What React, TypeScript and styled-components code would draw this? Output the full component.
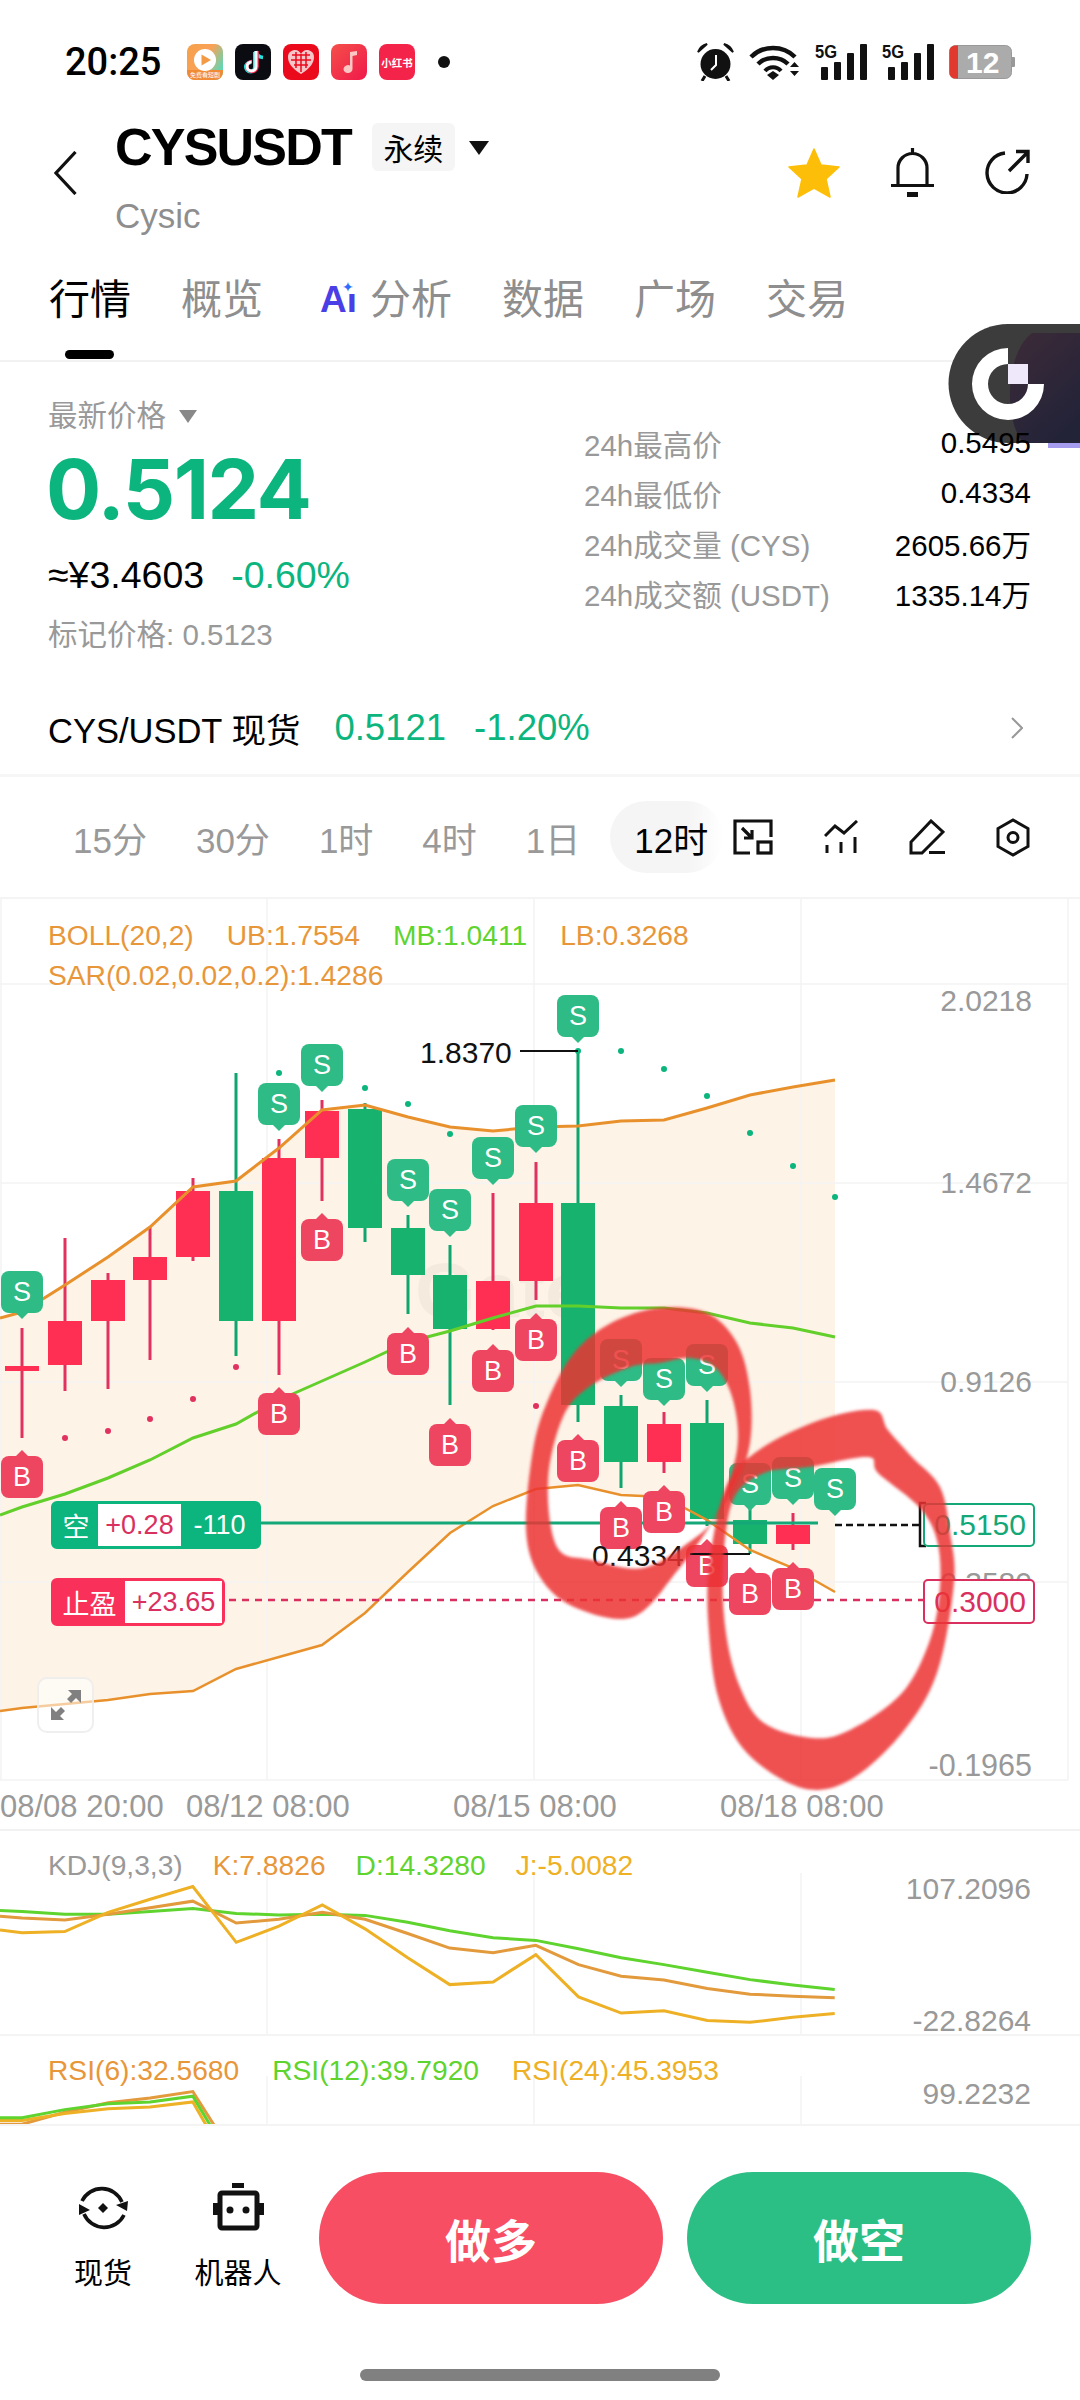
import React from 'react'
import styled, {createGlobalStyle} from 'styled-components'

const SANS = `"Liberation Sans", "Noto Sans CJK SC", sans-serif`
const GREY = '#999999'
const GREEN = '#0bb57d'
const PINK = '#d9305f'
const ORANGE = '#e8963a'
const LIME = '#5fd32e'
const YELLOW = '#eeb024'

const GlobalStyle = createGlobalStyle`
  html, body {
    margin: 0;
    padding: 0;
    background: #fff;
  }
`

const Page = styled.div`
  position: relative;
  width: 1080px;
  height: 2400px;
  overflow: hidden;
  background: #fff;
  font-family: ${SANS};
  color: #000;
  display: flex;
  flex-direction: column;
`

/* status bar */
const StatusBar = styled.div`
  height: 100px;
  box-sizing: border-box;
  padding: 24px 65px 0 65px;
  display: flex;
  align-items: center;
`
const Clock = styled.div`
  font-family: Roboto, sans-serif;
  font-weight: 500;
  font-size: 38px;
  width: 122px;
`
const AppIcons = styled.div`
  display: flex;
  align-items: center;
  gap: 12px;
`
const NoticeDot = styled.div`
  width: 12px;
  height: 12px;
  border-radius: 50%;
  background: #111;
  margin-left: 23px;
`
const StatusRight = styled.div`
  margin-left: auto;
  display: flex;
  align-items: center;
  gap: 15px;
`

const TinyText = styled.text`
  font-family: ${SANS};
  fill: #fff;
  text-anchor: middle;
`

const VideoApp = () => (
  <svg width="36" height="36" viewBox="0 0 36 36">
    <defs>
      <linearGradient id="vid" x1="0" y1="0" x2="1" y2="0.6">
        <stop offset="0" stopColor="#f6a04a" />
        <stop offset="0.55" stopColor="#f9a258" />
        <stop offset="1" stopColor="#63d6b4" />
      </linearGradient>
    </defs>
    <rect width="36" height="36" rx="8" fill="url(#vid)" />
    <path d="M0 26h36v2a8 8 0 0 1-8 8H8a8 8 0 0 1-8-8z" fill="#f08a35" />
    <circle cx="18" cy="16" r="11" fill="#fff" />
    <path d="M14.500 10.500 L24 16 L14.500 21.500 Z" fill="#f49a45" />
    <TinyText x="18" y="33" fontSize="6">免费看短剧</TinyText>
  </svg>
)
const TiktokApp = () => (
  <svg width="36" height="36" viewBox="0 0 36 36">
    <rect width="36" height="36" rx="8" fill="#0b0b12" />
    <path d="M20 8v15a4.500 4.500 0 1 1-4.500-4.500" fill="none" stroke="#25e4e0" strokeWidth="4" />
    <path d="M21 7c.5 3.500 3 6 7 6.500" fill="none" stroke="#25e4e0" strokeWidth="3.500" />
    <path d="M22 7v15.500a5 5 0 1 1-5-5" fill="none" stroke="#fe2c55" strokeWidth="3.500" />
    <path d="M21 7v15.500a4.500 4.500 0 1 1-4.500-4.500" fill="none" stroke="#fff" strokeWidth="3" />
  </svg>
)
const HeartApp = () => (
  <svg width="36" height="36" viewBox="0 0 36 36">
    <rect width="36" height="36" rx="8" fill="#ea0a1c" />
    <path d="M18 30 C8 24 5 18 5 13 C5 8 9 6 12 6 C15 6 17 8 18 10 C19 8 21 6 24 6 C27 6 31 8 31 13 C31 18 28 24 18 30 Z" fill="#f6c5c8" />
    <path d="M9 11h18M8 16h20M11 21h14M13 8v16M18 10v18M23 8v16" stroke="#ea0a1c" strokeWidth="1.500" />
  </svg>
)
const MusicApp = () => (
  <svg width="36" height="36" viewBox="0 0 36 36">
    <defs>
      <linearGradient id="mus" x1="0" y1="0" x2="1" y2="1">
        <stop offset="0" stopColor="#f4504a" />
        <stop offset="1" stopColor="#f0184a" />
      </linearGradient>
    </defs>
    <rect width="36" height="36" rx="8" fill="url(#mus)" />
    <path d="M19 8 L26 7 V11 L21.500 12 V25 A4.500 4 0 1 1 19 21.500 Z" fill="#fbc7c4" />
  </svg>
)
const BookApp = () => (
  <svg width="36" height="36" viewBox="0 0 36 36">
    <rect width="36" height="36" rx="8" fill="#f4234a" />
    <TinyText x="18" y="23" fontSize="10.500" fontWeight="700">小红书</TinyText>
  </svg>
)

const AlarmIcon = () => (
  <svg width="37" height="38" viewBox="0 0 37 38">
    <circle cx="18.500" cy="21" r="15" fill="#111" />
    <path d="M1 9 C3 4 6 2 10 1 Z M36 9 C34 4 31 2 27 1 Z" fill="#111" stroke="#111" strokeWidth="2" />
    <path d="M8 33 L5 38 M29 33 L32 38" stroke="#111" strokeWidth="3" />
    <path d="M19 12 V22 L14 27" fill="none" stroke="#fff" strokeWidth="2" />
  </svg>
)
const WifiIcon = () => (
  <svg width="51" height="36" viewBox="0 0 51 36">
    <path d="M2 13 C14 1 34 1 46 13" fill="none" stroke="#111" strokeWidth="4.500" />
    <path d="M9 20 C17 12 31 12 39 20" fill="none" stroke="#111" strokeWidth="4.500" />
    <path d="M16 27 C20 22 28 22 32 27" fill="none" stroke="#111" strokeWidth="4" />
    <path d="M18 31 L24 27 L30 31 L24 36 Z" fill="#111" />
    <path d="M41 23 L45.500 18 L50 23 Z M41 27 H50 L45.500 32 Z" fill="#111" />
  </svg>
)
const SignalLabel = styled.text`
  font-family: "Liberation Sans Narrow", "Liberation Sans", sans-serif;
  font-weight: 700;
  font-size: 18px;
  fill: #111;
`
const SignalIcon = () => (
  <svg width="52" height="38" viewBox="0 0 52 38">
    <SignalLabel x="0" y="15" textLength="22" lengthAdjust="spacingAndGlyphs">5G</SignalLabel>
    <rect x="6" y="24" width="7" height="13" rx="1" fill="#111" />
    <rect x="19" y="19" width="7" height="18" rx="1" fill="#111" />
    <rect x="32" y="10" width="7" height="27" rx="1" fill="#111" />
    <rect x="45" y="1" width="7" height="36" rx="1" fill="#111" />
  </svg>
)
const BatteryText = styled.text`
  font-family: ${SANS};
  font-weight: 700;
  font-size: 30px;
  fill: #fff;
`
const BatteryIcon = () => (
  <svg width="66" height="34" viewBox="0 0 66 34">
    <rect x="0.500" y="0.500" width="62" height="33" rx="6" fill="#ababab" stroke="#999" />
    <path d="M6 .5 H9 V33.500 H6 A5.500 5.500 0 0 1 .5 28 V6 A5.500 5.500 0 0 1 6 .5 Z" fill="#e2392e" />
    <path d="M63 12 h2 a1 1 0 0 1 1 1 v8 a1 1 0 0 1 -1 1 h-2 z" fill="#999" />
    <BatteryText x="17" y="28">12</BatteryText>
  </svg>
)

/* header */
const Header = styled.div`
  height: 150px;
  box-sizing: border-box;
  padding: 22px 50px 0 54px;
  display: flex;
  align-items: flex-start;
`
const BackIcon = styled.svg`
  margin-top: 29px;
  margin-right: 38px;
`
const TitleBlock = styled.div`
  display: flex;
  flex-direction: column;
`
const TitleRow = styled.div`
  display: flex;
  align-items: center;
  height: 50px;
`
const Symbol = styled.div`
  font-size: 52px;
  font-weight: 700;
  letter-spacing: -1.800px;
  line-height: 50px;
`
const PerpTag = styled.div`
  margin-left: 21px;
  width: 83px;
  height: 48px;
  background: #f5f5f5;
  border-radius: 6px;
  font-size: 30px;
  display: flex;
  align-items: center;
  justify-content: center;
`
const Caret = styled.div<{$w: number; $h: number; $c: string}>`
  width: 0;
  height: 0;
  border-left: ${(p) => p.$w / 2}px solid transparent;
  border-right: ${(p) => p.$w / 2}px solid transparent;
  border-top: ${(p) => p.$h}px solid ${(p) => p.$c};
`
const TitleCaret = styled(Caret)`
  margin-left: 14px;
  margin-top: 2px;
`
const BaseName = styled.div`
  margin-top: 26px;
  font-size: 35px;
  line-height: 36px;
  color: #8e8e8e;
`
const HeaderActions = styled.div`
  margin-left: auto;
  margin-top: 26px;
  display: flex;
  align-items: flex-start;
  gap: 50px;
`

/* tabs */
const TabRow = styled.div`
  height: 112px;
  box-sizing: border-box;
  padding: 28px 0 0 49px;
  display: flex;
  align-items: flex-start;
  gap: 50px;
  border-bottom: 2px solid #f2f2f2;
`
const Tab = styled.div<{$active?: boolean}>`
  position: relative;
  font-size: 41px;
  line-height: 44px;
  color: ${(p) => (p.$active ? '#000' : '#8e8e8e')};
  display: flex;
  align-items: center;
  &::after {
    content: ${(p) => (p.$active ? '""' : 'none')};
    position: absolute;
    left: 16px;
    top: 72px;
    width: 49px;
    height: 9px;
    border-radius: 5px;
    background: #000;
  }
`
const AiMark = styled.span`
  position: relative;
  width: 50px;
  margin-left: 7px;
  font-size: 37px;
  font-weight: 700;
  font-family: "Liberation Sans", sans-serif;
  color: #4a3fe6;
`
const AiSpark = styled.span`
  position: absolute;
  left: 22px;
  top: 2px;
  width: 14px;
  height: 14px;
  font-size: 14px;
  line-height: 14px;
  color: #2f6bff;
  background: #fff;
  font-family: "DejaVu Sans", sans-serif;
`

/* price */
const PriceSection = styled.div`
  position: relative;
  z-index: 1;
  height: 325px;
  box-sizing: border-box;
  padding: 0 49px 0 48px;
  display: flex;
`
const PriceLeft = styled.div`
  width: 536px;
  padding-top: 34px;
  display: flex;
  flex-direction: column;
`
const LatestLabel = styled.div`
  display: flex;
  align-items: center;
  gap: 13px;
  font-size: 29.500px;
  line-height: 40px;
  color: ${GREY};
`
const LastPrice = styled.div`
  margin: 4px 0 0 -2px;
  font-family: Inter, sans-serif;
  font-weight: 700;
  font-size: 82px;
  line-height: 100px;
  letter-spacing: -1.500px;
  color: ${GREEN};
`
const FiatRow = styled.div`
  margin-top: 15px;
  display: flex;
  gap: 27px;
  font-size: 37.500px;
  line-height: 40px;
`
const Change = styled.span`
  color: ${GREEN};
`
const MarkPrice = styled.div`
  margin-top: 20px;
  font-size: 29.500px;
  line-height: 40px;
  color: ${GREY};
`
const Stats = styled.div`
  flex: 1;
  padding-top: 56px;
  display: flex;
  flex-direction: column;
`
const StatRow = styled.div`
  height: 50px;
  display: flex;
  align-items: center;
  justify-content: space-between;
  font-size: 29.500px;
`
const StatLabel = styled.span`
  color: ${GREY};
`

const SpotRow = styled.div`
  height: 90px;
  box-sizing: border-box;
  padding: 0 57px 5px 48px;
  display: flex;
  align-items: center;
  border-bottom: 3px solid #f6f6f6;
  font-size: 34.500px;
`
const SpotPrice = styled.span<{$gap: number}>`
  margin-left: ${(p) => p.$gap}px;
  font-size: 36.500px;
  color: ${GREEN};
`
const SpotArrow = styled.svg`
  margin-left: auto;
`

/* timeframes */
const FrameRow = styled.div`
  height: 122px;
  box-sizing: border-box;
  padding-left: 73px;
  display: flex;
  align-items: center;
  border-bottom: 2px solid #f4f4f4;
`
const Frames = styled.div`
  display: flex;
  align-items: center;
  gap: 49px;
  font-size: 35px;
  color: ${GREY};
`
const FrameActive = styled.div`
  margin-left: -19px;
  padding: 0 15px 0 24px;
  height: 72px;
  display: flex;
  align-items: center;
  border-radius: 36px;
  color: #000;
  background: linear-gradient(90deg, #f5f5f5 70%, #fff 100%);
`
const FrameTools = styled.div`
  margin-left: 10px;
  display: flex;
  align-items: center;
  gap: 51px;
`

/* chart panels */
const MainPanel = styled.div`
  position: relative;
  height: 932px;
  box-sizing: border-box;
  border-bottom: 2px solid #f2f2f2;
  padding: 16px 0 0 48px;
`
const SubPanel = styled.div<{$h: number}>`
  position: relative;
  height: ${(p) => p.$h}px;
  box-sizing: border-box;
  padding: 14px 0 0 48px;
  overflow: hidden;
  border-bottom: 2px solid #f4f4f4;
`
const Canvas = styled.svg`
  position: absolute;
  left: 0;
  top: 0;
`
const InkLayer = styled(Canvas)`
  z-index: 3;
  pointer-events: none;
`
const LegendRow = styled.div<{$gap: number}>`
  position: relative;
  z-index: 1;
  display: flex;
  gap: ${(p) => p.$gap}px;
  font-size: 28.200px;
  line-height: 40px;
`
const LegendItem = styled.span<{$c: string}>`
  color: ${(p) => p.$c};
`
const AxisText = styled.text<{$c?: string; $size?: number; $anchor?: string}>`
  font-family: ${SANS};
  font-size: ${(p) => p.$size ?? 30}px;
  fill: ${(p) => p.$c ?? GREY};
  text-anchor: ${(p) => p.$anchor ?? 'end'};
  dominant-baseline: central;
`
const MarkerLetter = styled.text`
  font-family: ${SANS};
  font-size: 27px;
  fill: #fff;
  text-anchor: middle;
  dominant-baseline: central;
`

const PositionTag = styled.div<{$top: number; $w: number; $c: string}>`
  position: absolute;
  z-index: 2;
  left: 51px;
  top: ${(p) => p.$top}px;
  width: ${(p) => p.$w}px;
  height: 48px;
  box-sizing: border-box;
  border: 3px solid ${(p) => p.$c};
  border-radius: 6px;
  background: ${(p) => p.$c};
  display: flex;
  align-items: stretch;
  font-size: 27px;
  color: #fff;
`
const TagCell = styled.div<{$w: number}>`
  width: ${(p) => p.$w}px;
  display: flex;
  align-items: center;
  justify-content: center;
`
const TagValue = styled(TagCell)<{$c: string}>`
  background: #fff;
  color: ${(p) => p.$c};
`
const PriceBox = styled.div<{$top: number; $h: number; $c: string}>`
  position: absolute;
  z-index: 2;
  left: 923px;
  top: ${(p) => p.$top}px;
  width: 112px;
  height: ${(p) => p.$h}px;
  box-sizing: border-box;
  border: 2.500px solid ${(p) => p.$c};
  border-radius: 5px;
  background: #fff;
  color: ${(p) => p.$c};
  font-size: 30px;
  display: flex;
  align-items: center;
  justify-content: flex-end;
  padding-right: 7px;
`
const ExpandButton = styled.div`
  position: absolute;
  z-index: 2;
  left: 37px;
  top: 778px;
  width: 57px;
  height: 56px;
  box-sizing: border-box;
  border: 2px solid rgba(235, 235, 235, 0.8);
  border-radius: 10px;
  background: rgba(255, 255, 255, 0.55);
  display: flex;
  align-items: center;
  justify-content: center;
`

/* bottom bar */
const BottomBar = styled.div`
  flex: 1;
  box-sizing: border-box;
  padding-top: 46px;
  display: flex;
  flex-direction: column;
`
const BottomRow = styled.div`
  display: flex;
  align-items: flex-start;
  padding: 0 49px 0 43px;
`
const Action = styled.div`
  width: 120px;
  margin-top: 11px;
  margin-right: 15px;
  display: flex;
  flex-direction: column;
  align-items: center;
  gap: 21px;
  font-size: 29px;
  line-height: 40px;
`
const ActionIcon = styled.div`
  height: 50px;
`
const TradeButton = styled.div<{$c: string}>`
  width: 344px;
  height: 132px;
  border-radius: 66px;
  background: ${(p) => p.$c};
  color: #fff;
  font-size: 46px;
  font-weight: 700;
  display: flex;
  align-items: center;
  justify-content: center;
  margin-left: ${(p) => (p.$c === '#f84e63' ? '6px' : '24px')};
`
const HomeBar = styled.div`
  align-self: center;
  margin-top: 65px;
  width: 360px;
  height: 12px;
  border-radius: 6px;
  background: #808080;
`

/* floating widget */
const FloatWidget = styled.svg`
  position: absolute;
  z-index: 0;
  left: 948px;
  top: 324px;
`

type P = [number, number]
const poly = (pts: P[]) => pts.map((p, i) => `${i ? 'L' : 'M'}${p[0]} ${p[1]}`).join(' ')
const smooth = (pts: P[]) => {
  const n = pts.length
  let d = `M${pts[0][0]} ${pts[0][1]}`
  for (let i = 0; i < n; i++) {
    const a = pts[(i - 1 + n) % n]
    const b = pts[i]
    const c = pts[(i + 1) % n]
    const e = pts[(i + 2) % n]
    d += ` C${b[0] + (c[0] - a[0]) / 6} ${b[1] + (c[1] - a[1]) / 6} ${c[0] - (e[0] - b[0]) / 6} ${c[1] - (e[1] - b[1]) / 6} ${c[0]} ${c[1]}`
  }
  return d + ' Z'
}

const upper: P[] = [[0, 1318], [22, 1312], [65, 1285], [108, 1257], [150, 1227], [193, 1187], [236, 1181], [279, 1148], [322, 1110], [365, 1105], [408, 1117], [450, 1127], [493, 1131], [536, 1127], [578, 1126], [621, 1121], [664, 1120], [707, 1108], [750, 1095], [793, 1087], [835, 1080]]
const middle: P[] = [[0, 1515], [22, 1507], [65, 1494], [108, 1478], [150, 1460], [193, 1438], [236, 1424], [279, 1400], [322, 1381], [365, 1362], [408, 1342], [450, 1331], [493, 1318], [536, 1306], [578, 1306], [621, 1308], [664, 1308], [707, 1313], [750, 1323], [793, 1328], [835, 1337]]
const lower: P[] = [[0, 1711], [22, 1708], [65, 1704], [108, 1700], [150, 1694], [193, 1691], [236, 1669], [279, 1657], [322, 1645], [365, 1613], [408, 1572], [450, 1533], [493, 1506], [536, 1489], [578, 1485], [621, 1495], [664, 1497], [707, 1520], [750, 1550], [793, 1568], [835, 1592]]

// x, wick top, wick bottom, body top, body bottom, up
const candles: [number, number, number, number, number, boolean][] = [
  [22, 1328, 1438, 1366, 1371, true],
  [65, 1238, 1391, 1321, 1365, true],
  [108, 1273, 1389, 1280, 1321, true],
  [150, 1227, 1360, 1257, 1280, true],
  [193, 1178, 1261, 1191, 1257, true],
  [236, 1073, 1356, 1191, 1321, false],
  [279, 1139, 1375, 1158, 1321, true],
  [322, 1100, 1201, 1111, 1158, true],
  [365, 1103, 1242, 1109, 1228, false],
  [408, 1215, 1314, 1228, 1275, false],
  [450, 1245, 1405, 1275, 1329, false],
  [493, 1193, 1330, 1281, 1329, true],
  [536, 1162, 1300, 1203, 1281, true],
  [578, 1050, 1422, 1203, 1405, false],
  [621, 1395, 1488, 1406, 1462, false],
  [664, 1412, 1473, 1424, 1462, true],
  [707, 1400, 1526, 1423, 1519, false],
  [750, 1500, 1554, 1520, 1544, false],
  [793, 1513, 1550, 1525, 1544, true]
]

const sarUp: P[] = [[279, 1073], [365, 1088], [408, 1104], [450, 1134], [578, 1051], [621, 1051], [664, 1069], [707, 1096], [750, 1133], [793, 1166], [835, 1197]]
const sarDown: P[] = [[65, 1438], [108, 1431], [150, 1419], [193, 1399], [236, 1367], [536, 1406]]

const sells: P[] = [[22, 1271], [279, 1083], [322, 1044], [408, 1159], [450, 1189], [493, 1137], [536, 1105], [578, 995], [621, 1339], [664, 1358], [707, 1344], [750, 1463], [793, 1457], [835, 1468]]
const buys: P[] = [[22, 1456], [279, 1393], [322, 1219], [408, 1333], [450, 1424], [493, 1350], [536, 1319], [578, 1440], [621, 1507], [664, 1491], [707, 1545], [750, 1573], [793, 1568]]

const inkLeftOuter: P[] = [[659, 1308], [707, 1313], [737, 1343], [750, 1390], [750, 1443], [736, 1483], [712, 1523], [678, 1570], [633, 1617], [574, 1607], [540, 1577], [526, 1530], [533, 1450], [548, 1400], [574, 1353], [611, 1323]]
const inkLeftInner: P[] = [[659, 1363], [630, 1367], [589, 1387], [563, 1417], [548, 1480], [557, 1547], [592, 1560], [643, 1568], [688, 1543], [716, 1515], [737, 1450], [733, 1400], [716, 1368], [690, 1358]]
const inkRightOuter: P[] = [[874, 1410], [820, 1420], [759, 1450], [726, 1487], [709, 1567], [709, 1633], [719, 1700], [747, 1753], [802, 1788], [850, 1780], [902, 1733], [937, 1673], [954, 1583], [950, 1533], [940, 1487], [912, 1457], [888, 1430]]
const inkRightInner: P[] = [[809, 1467], [868, 1457], [878, 1473], [919, 1507], [937, 1540], [940, 1587], [930, 1640], [902, 1693], [850, 1730], [812, 1738], [764, 1723], [740, 1687], [726, 1633], [723, 1567], [733, 1500], [764, 1473]]

const kx = [0, 32, 94, 157, 218, 280, 343, 405, 468, 530, 592, 653, 716, 778, 840, 902, 964, 1027, 1089, 1151, 1212]
const kdj = (ys: number[]): P[] => ys.map((v, i) => [kx[i] / 1.452, 1800 + v / 2.6])
const kdjD = kdj([287, 290, 297, 297, 290, 282, 295, 299, 297, 300, 318, 340, 358, 365, 387, 410, 428, 448, 467, 481, 493])
const kdjK = kdj([302, 307, 312, 297, 280, 263, 320, 310, 292, 310, 347, 385, 397, 378, 428, 458, 468, 490, 505, 510, 514])
const kdjJ = kdj([338, 345, 342, 292, 258, 225, 370, 328, 273, 335, 410, 480, 473, 402, 512, 554, 548, 573, 578, 565, 555])

const rsiOf = (ys: number[], end: number): P[] => [
  ...[0, 32, 94, 157, 218, 280].map((x, i): P => [x / 1.452, 1800 + ys[i] / 2.6]),
  [end / 1.452, 1800 + 860 / 2.6]
]
const rsi6 = rsiOf([843, 843, 812, 787, 775, 758], 316)
const rsi12 = rsiOf([826, 826, 805, 790, 785, 770], 310)
const rsi24 = rsiOf([833, 833, 815, 803, 798, 785], 304)

const GRID = '#f3f3f3'

const Marker = ({x, y, kind}: {x: number; y: number; kind: 'S' | 'B'}) => {
  const isSell = kind === 'S'
  const fill = isSell ? '#2ebb85' : '#ee4560'
  const tip = isSell
    ? `${x - 7},${y + 41} ${x},${y + 48} ${x + 7},${y + 41}`
    : `${x - 7},${y + 1} ${x},${y - 6} ${x + 7},${y + 1}`
  return (
    <g>
      <polygon points={tip} fill={fill} />
      <rect x={x - 21} y={y} width={42} height={42} rx={8} fill={fill} />
      <MarkerLetter x={x} y={y + 21}>{kind}</MarkerLetter>
    </g>
  )
}

const MainChart = () => (
  <Canvas width="1080" height="932" viewBox="0 899 1080 932">
    <path d={`${poly(upper)} ${poly([...lower].reverse()).replace('M', 'L')} Z`} fill="#fdf3e7" />
    {[984, 1183, 1382, 1582, 1780].map((y) => (
      <line key={y} x1="0" x2="1068" y1={y} y2={y} stroke={GRID} strokeWidth="1.500" />
    ))}
    {[1, 267, 534, 801, 1068].map((x) => (
      <line key={x} x1={x} x2={x} y1="899" y2="1780" stroke={GRID} strokeWidth="1.500" />
    ))}
    <AxisText x="415" y="1290" $c="rgba(0,0,0,0.035)" $size={78} $anchor="start" fontWeight="700">Gate</AxisText>
    {candles.map(([x, wt, wb, bt, bb, up]) => (
      <g key={x}>
        <line x1={x} x2={x} y1={wt} y2={wb} stroke={up ? '#e0315f' : '#0ea56f'} strokeWidth="3" />
        <rect x={x - 17} y={bt} width="34" height={bb - bt} fill={up ? '#fe2f53' : '#17b26e'} />
      </g>
    ))}
    {sarUp.map(([x, y]) => <circle key={`${x}${y}`} cx={x} cy={y} r="3" fill={GREEN} />)}
    {sarDown.map(([x, y]) => <circle key={`${x}${y}`} cx={x} cy={y} r="3" fill="#e0315f" />)}
    <path d={poly(upper)} fill="none" stroke="#e8912c" strokeWidth="3" />
    <path d={poly(lower)} fill="none" stroke="#e8912c" strokeWidth="2.500" />
    <path d={poly(middle)} fill="none" stroke="#62cf2b" strokeWidth="3" />
    <line x1="261" x2="818" y1="1523" y2="1523" stroke="#14a878" strokeWidth="3" />
    <line x1="835" x2="919" y1="1525" y2="1525" stroke="#111" strokeWidth="2.500" strokeDasharray="7 4" />
    <path d="M926 1503 H920 V1546 H926" fill="none" stroke="#111" strokeWidth="2.500" />
    <line x1="229" x2="923" y1="1600" y2="1600" stroke={PINK} strokeWidth="2.500" strokeDasharray="7 6" />
    {sells.map(([x, y]) => <Marker key={`s${x}`} x={x} y={y} kind="S" />)}
    {buys.map(([x, y]) => <Marker key={`b${x}`} x={x} y={y} kind="B" />)}
    <AxisText x="420" y="1052" $c="#111" $anchor="start">1.8370</AxisText>
    <line x1="520" x2="578" y1="1051" y2="1051" stroke="#111" strokeWidth="2" />
    <AxisText x="592" y="1555" $c="#111" $anchor="start">0.4334</AxisText>
    <line x1="690" x2="750" y1="1554" y2="1554" stroke="#111" strokeWidth="2" />
    <AxisText x="1032" y="1000">2.0218</AxisText>
    <AxisText x="1032" y="1182">1.4672</AxisText>
    <AxisText x="1032" y="1381">0.9126</AxisText>
    <AxisText x="1032" y="1582">0.3580</AxisText>
    <AxisText x="1032" y="1765" $size={30.5}>-0.1965</AxisText>
    <AxisText x="0" y="1806" $size={31} $anchor="start">08/08 20:00</AxisText>
    <AxisText x="186" y="1806" $size={31} $anchor="start">08/12 08:00</AxisText>
    <AxisText x="453" y="1806" $size={31} $anchor="start">08/15 08:00</AxisText>
    <AxisText x="720" y="1806" $size={31} $anchor="start">08/18 08:00</AxisText>
  </Canvas>
)

const HandInk = () => (
  <InkLayer width="1080" height="932" viewBox="0 899 1080 932">
    <defs>
      <filter id="brush" x="-5%" y="-5%" width="110%" height="110%">
        <feGaussianBlur stdDeviation="1.600" />
      </filter>
    </defs>
    <g filter="url(#brush)" fill="#ec3232" fillOpacity="0.85" fillRule="evenodd">
      <path d={`${smooth(inkLeftOuter)} ${smooth(inkLeftInner)}`} />
      <path d={`${smooth(inkRightOuter)} ${smooth(inkRightInner)}`} />
    </g>
  </InkLayer>
)

const KdjChart = () => (
  <Canvas width="1080" height="205" viewBox="0 1831 1080 205">
    {[267, 534, 801].map((x) => (
      <line key={x} x1={x} x2={x} y1="1873" y2="2034" stroke={GRID} strokeWidth="1.500" />
    ))}
    <path d={poly(kdjD)} fill="none" stroke="#5fd32e" strokeWidth="3" />
    <path d={poly(kdjK)} fill="none" stroke="#e29a3c" strokeWidth="3" />
    <path d={poly(kdjJ)} fill="none" stroke={YELLOW} strokeWidth="3" />
    <AxisText x="1031" y="1888">107.2096</AxisText>
    <AxisText x="1031" y="2020">-22.8264</AxisText>
  </Canvas>
)

const RsiChart = () => (
  <Canvas width="1080" height="90" viewBox="0 2036 1080 90">
    {[267, 534, 801].map((x) => (
      <line key={x} x1={x} x2={x} y1="2076" y2="2126" stroke={GRID} strokeWidth="1.500" />
    ))}
    <path d={poly(rsi6)} fill="none" stroke="#e29a3c" strokeWidth="3" />
    <path d={poly(rsi24)} fill="none" stroke={YELLOW} strokeWidth="3" />
    <path d={poly(rsi12)} fill="none" stroke="#5fd32e" strokeWidth="3" />
    <AxisText x="1031" y="2093">99.2232</AxisText>
  </Canvas>
)

const App = () => {
  return (
    <Page>
      <GlobalStyle />
      <FloatWidget width="132" height="124" viewBox="0 0 132 124">
        <defs>
          <linearGradient id="wid" x1="0" y1="0" x2="0.6" y2="1">
            <stop offset="0" stopColor="#3d2b38" />
            <stop offset="1" stopColor="#232338" />
          </linearGradient>
        </defs>
        <rect x="100" y="115" width="32" height="9" fill="#a79df0" />
        <path d="M60 0 H132 V119 H60 A59.500 59.500 0 0 1 60 0 Z" fill="#3c3c3c" />
        <path d="M84 9 H132 V119 H76 C56 100 56 30 84 9 Z" fill="url(#wid)" />
        <path d="M60 24 A36 36 0 1 0 96 60 H80 A20 20 0 1 1 60 40 Z" fill="#fff" />
        <rect x="60" y="40" width="20" height="20" fill="#efe8fb" />
      </FloatWidget>

      <StatusBar>
        <Clock>20:25</Clock>
        <AppIcons>
          <VideoApp />
          <TiktokApp />
          <HeartApp />
          <MusicApp />
          <BookApp />
        </AppIcons>
        <NoticeDot />
        <StatusRight>
          <AlarmIcon />
          <WifiIcon />
          <SignalIcon />
          <SignalIcon />
          <BatteryIcon />
        </StatusRight>
      </StatusBar>

      <Header>
        <BackIcon width="23" height="44" viewBox="0 0 23 44">
          <path d="M21.500 1 L2 22 L21.500 43" fill="none" stroke="#111" strokeWidth="3.200" />
        </BackIcon>
        <TitleBlock>
          <TitleRow>
            <Symbol>CYSUSDT</Symbol>
            <PerpTag>永续</PerpTag>
            <TitleCaret $w={20} $h={14} $c="#111" />
          </TitleRow>
          <BaseName>Cysic</BaseName>
        </TitleBlock>
        <HeaderActions>
          <svg width="52" height="50" viewBox="0 0 52 50">
            <path d="M26 1 L33 17 L51 19 L38 31 L42 49 L26 40 L10 49 L14 31 L1 19 L19 17 Z" fill="#fdbe09" stroke="#fdbe09" strokeWidth="1.500" strokeLinejoin="round" />
          </svg>
          <svg width="45" height="49" viewBox="0 0 45 49">
            <path d="M22.500 0 V6 M8 37 V20 a14.500 14.500 0 0 1 29 0 V37 M1 37.500 H44" fill="none" stroke="#111" strokeWidth="3.200" />
            <rect x="17" y="44" width="11" height="5" fill="#111" />
          </svg>
          <svg width="45" height="46" viewBox="0 0 45 46">
            <path d="M20 5 A20 20 0 1 0 42 26 M24 23 L42 5 M31 3.500 H43 V15" fill="none" stroke="#111" strokeWidth="3.400" />
          </svg>
        </HeaderActions>
      </Header>

      <TabRow>
        <Tab $active>行情</Tab>
        <Tab>概览</Tab>
        <Tab>
          <AiMark>
            Ai
            <AiSpark>✦</AiSpark>
          </AiMark>
          分析
        </Tab>
        <Tab>数据</Tab>
        <Tab>广场</Tab>
        <Tab>交易</Tab>
      </TabRow>

      <PriceSection>
        <PriceLeft>
          <LatestLabel>
            最新价格
            <Caret $w={18} $h={13} $c="#888" />
          </LatestLabel>
          <LastPrice>0.5124</LastPrice>
          <FiatRow>
            <span>≈¥3.4603</span>
            <Change>-0.60%</Change>
          </FiatRow>
          <MarkPrice>标记价格: 0.5123</MarkPrice>
        </PriceLeft>
        <Stats>
          <StatRow>
            <StatLabel>24h最高价</StatLabel>
            <span>0.5495</span>
          </StatRow>
          <StatRow>
            <StatLabel>24h最低价</StatLabel>
            <span>0.4334</span>
          </StatRow>
          <StatRow>
            <StatLabel>24h成交量 (CYS)</StatLabel>
            <span>2605.66万</span>
          </StatRow>
          <StatRow>
            <StatLabel>24h成交额 (USDT)</StatLabel>
            <span>1335.14万</span>
          </StatRow>
        </Stats>
      </PriceSection>

      <SpotRow>
        CYS/USDT 现货
        <SpotPrice $gap={34}>0.5121</SpotPrice>
        <SpotPrice $gap={28}>-1.20%</SpotPrice>
        <SpotArrow width="12" height="22" viewBox="0 0 12 22">
          <path d="M1 1 L11 11 L1 21" fill="none" stroke="#999" strokeWidth="2" />
        </SpotArrow>
      </SpotRow>

      <FrameRow>
        <Frames>
          <span>15分</span>
          <span>30分</span>
          <span>1时</span>
          <span>4时</span>
          <span>1日</span>
          <FrameActive>12时</FrameActive>
        </Frames>
        <FrameTools>
          <svg width="40" height="36" viewBox="0 0 40 36">
            <path d="M17 34 H2 V2 H38 V18 M9 9 L19 19 M19 11 V19 H11" fill="none" stroke="#111" strokeWidth="3.200" />
            <rect x="25" y="23" width="13" height="11" fill="none" stroke="#111" strokeWidth="3.200" />
          </svg>
          <svg width="34" height="34" viewBox="0 0 34 34">
            <path d="M1 16 L11 6 L20 13 L33 1 M3 25 V33 M17 22 V33 M31 17 V33" fill="none" stroke="#111" strokeWidth="3" />
          </svg>
          <svg width="36" height="36" viewBox="0 0 36 36">
            <path d="M2 34 V23 L22 2 L34 13 L13 34 Z M20 33.500 H36" fill="none" stroke="#111" strokeWidth="3" />
          </svg>
          <svg width="34" height="39" viewBox="0 0 34 39">
            <path d="M17 2 L32 10.500 V28.500 L17 37 L2 28.500 V10.500 Z" fill="none" stroke="#111" strokeWidth="3" />
            <circle cx="17" cy="19.500" r="5" fill="none" stroke="#111" strokeWidth="3" />
          </svg>
        </FrameTools>
      </FrameRow>

      <MainPanel>
        <MainChart />
        <LegendRow $gap={33}>
          <LegendItem $c={ORANGE}>BOLL(20,2)</LegendItem>
          <LegendItem $c={ORANGE}>UB:1.7554</LegendItem>
          <LegendItem $c={LIME}>MB:1.0411</LegendItem>
          <LegendItem $c={ORANGE}>LB:0.3268</LegendItem>
        </LegendRow>
        <LegendRow $gap={33}>
          <LegendItem $c={ORANGE}>SAR(0.02,0.02,0.2):1.4286</LegendItem>
        </LegendRow>
        <PositionTag $top={602} $w={210} $c={GREEN}>
          <TagCell $w={44}>空</TagCell>
          <TagValue $w={83} $c={PINK}>+0.28</TagValue>
          <TagCell $w={77}>-110</TagCell>
        </PositionTag>
        <PositionTag $top={679} $w={174} $c="#f8305a">
          <TagCell $w={71}>止盈</TagCell>
          <TagValue $w={97} $c={PINK}>+23.65</TagValue>
        </PositionTag>
        <PriceBox $top={604} $h={44} $c="#14a878">0.5150</PriceBox>
        <PriceBox $top={680} $h={45} $c={PINK}>0.3000</PriceBox>
        <ExpandButton>
          <svg width="30" height="30" viewBox="0 0 30 30">
            <path d="M0 30 V17 L5 22 L10 17 L14 21 L9 26 L13 30 Z M30 0 V13 L25 8 L20 13 L16 9 L21 4 L17 0 Z" fill="#808080" />
          </svg>
        </ExpandButton>
        <HandInk />
      </MainPanel>

      <SubPanel $h={205}>
        <KdjChart />
        <LegendRow $gap={30}>
          <LegendItem $c={GREY}>KDJ(9,3,3)</LegendItem>
          <LegendItem $c={ORANGE}>K:7.8826</LegendItem>
          <LegendItem $c={LIME}>D:14.3280</LegendItem>
          <LegendItem $c={YELLOW}>J:-5.0082</LegendItem>
        </LegendRow>
      </SubPanel>
      <SubPanel $h={90}>
        <RsiChart />
        <LegendRow $gap={33}>
          <LegendItem $c={ORANGE}>RSI(6):32.5680</LegendItem>
          <LegendItem $c={LIME}>RSI(12):39.7920</LegendItem>
          <LegendItem $c={YELLOW}>RSI(24):45.3953</LegendItem>
        </LegendRow>
      </SubPanel>

      <BottomBar>
        <BottomRow>
          <Action>
            <ActionIcon>
              <svg width="50" height="50" viewBox="0 0 50 50">
                <path d="M4 18 A22 22 0 0 1 44 19 M46 32 A22 22 0 0 1 6 31" fill="none" stroke="#111" strokeWidth="3.600" />
                <path d="M38 22 L50 18 L49 28 Z M1 21 L12 27 L1 32 Z" fill="#111" />
                <path d="M25 20 L30 25 L25 30 L20 25 Z" fill="#111" />
              </svg>
            </ActionIcon>
            现货
          </Action>
          <Action>
            <ActionIcon>
              <svg width="51" height="48" viewBox="0 0 51 48">
                <rect x="19" y="0" width="12" height="5" fill="#111" />
                <rect x="7" y="10" width="37" height="35" rx="2" fill="none" stroke="#111" strokeWidth="5" />
                <rect x="0" y="20" width="5" height="12" fill="#111" />
                <rect x="46" y="20" width="5" height="12" fill="#111" />
                <circle cx="17" cy="27" r="3.500" fill="#111" />
                <circle cx="33" cy="27" r="3.500" fill="#111" />
              </svg>
            </ActionIcon>
            机器人
          </Action>
          <TradeButton $c="#f84e63">做多</TradeButton>
          <TradeButton $c="#2bbf85">做空</TradeButton>
        </BottomRow>
        <HomeBar />
      </BottomBar>
    </Page>
  )
}

export default App
